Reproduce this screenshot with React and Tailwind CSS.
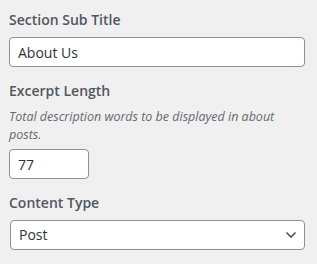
import { useState } from 'react';

function Chevron() {
  return (
    <svg width="12" height="8" viewBox="0 0 12 8" className="absolute right-[8px] top-[11px] pointer-events-none">
      <path d="M1.5 1.5 L6 6 L10.5 1.5" fill="none" stroke="#50575e" strokeWidth="1.6" />
    </svg>
  );
}

export default function App() {
  const [subTitle, setSubTitle] = useState('About Us');
  const [excerpt, setExcerpt] = useState('77');
  const [type, setType] = useState('Post');

  return (
    <div className="w-[317px] h-[264px] bg-[#f0f0f1] px-[9px] pt-[10px] font-['Open_Sans',sans-serif] text-[#50575e]">
      <label className="block h-[20px] leading-[20px] text-[14px] font-semibold mb-[7px]">Section Sub Title</label>
      <input
        type="text"
        value={subTitle}
        onChange={(e) => setSubTitle(e.target.value)}
        className="block w-[296px] h-[30px] px-[8px] bg-white border border-[#8c8f94] rounded-[4px] text-[14px] text-[#2c3338] outline-none"
      />

      <label className="block h-[20px] leading-[20px] text-[14px] font-semibold mt-[14px] mb-[7px]">Excerpt Length</label>
      <p className="italic text-[12.5px] leading-[18px] text-[#646970] mb-[5px] pr-[10px]">
        Total description words to be displayed in about posts.
      </p>
      <input
        type="number"
        value={excerpt}
        onChange={(e) => setExcerpt(e.target.value)}
        className="block w-[80px] h-[30px] px-[8px] bg-white border border-[#8c8f94] rounded-[4px] text-[14px] text-[#2c3338] outline-none [appearance:textfield]"
      />

      <label className="block h-[20px] leading-[20px] text-[14px] font-semibold mt-[14px] mb-[7px]">Content Type</label>
      <div className="relative ml-[1px] w-[295px]">
        <select
          value={type}
          onChange={(e) => setType(e.target.value)}
          className="block w-full h-[30px] pl-[8px] pr-[24px] pb-[1px] bg-white border border-[#8c8f94] rounded-[4px] text-[14px] text-[#2c3338] outline-none appearance-none"
        >
          <option>Post</option>
          <option>Page</option>
        </select>
        <Chevron />
      </div>
    </div>
  );
}
